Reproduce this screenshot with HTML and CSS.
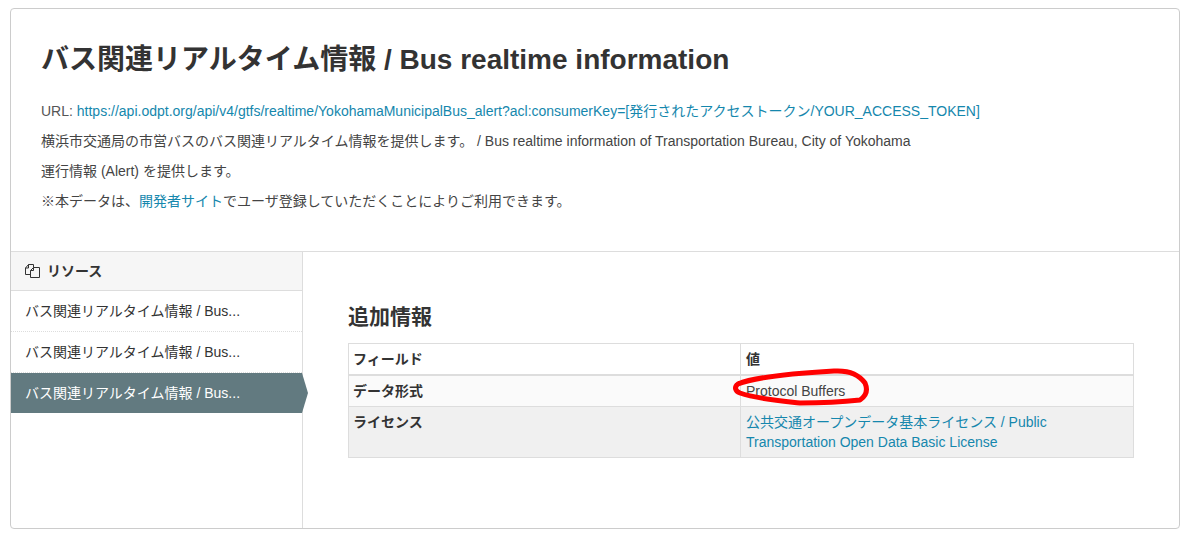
FILE: index.html
```html
<!DOCTYPE html>
<html lang="ja">
  <head>
    <meta charset="utf-8">
    <title>バス関連リアルタイム情報 / Bus realtime information</title>
    <link rel="stylesheet" href="styles.css">
  </head>
  <body>
    <div class="module">
      <section class="head">
        <h1>バス関連リアルタイム情報 / Bus realtime information</h1>
        <p class="url">URL: <a href="#">https://api.odpt.org/api/v4/gtfs/realtime/YokohamaMunicipalBus_alert?acl:consumerKey=[発行されたアクセストークン/YOUR_ACCESS_TOKEN]</a></p>
        <p>横浜市交通局の市営バスのバス関連リアルタイム情報を提供します。 / Bus realtime information of Transportation Bureau, City of Yokohama</p>
        <p>運行情報 (Alert) を提供します。</p>
        <p>※本データは、<a href="#">開発者サイト</a>でユーザ登録していただくことによりご利用できます。</p>
      </section>
      <div class="wrap">
        <aside class="side">
          <h2 class="side-title">
            <svg class="icon" width="15" height="14" viewBox="0 0 15 14" fill="none" stroke="#333" stroke-width="1">
              <path d="M5.5 10.5H0.5V4L3.5 0.5H8.5V3.5"/>
              <path d="M3.5 0.5V4H0.5"/>
              <path d="M5.5 13.5V6.5L8.5 3.5H14.5V13.5Z"/>
              <path d="M8.5 3.5V6.5H5.5"/>
            </svg>
            リソース
          </h2>
          <ul class="res-list">
            <li><a href="#">バス関連リアルタイム情報 / Bus...</a></li>
            <li><a href="#">バス関連リアルタイム情報 / Bus...</a></li>
            <li class="active"><a href="#">バス関連リアルタイム情報 / Bus...</a></li>
          </ul>
        </aside>
        <main class="content">
          <h3>追加情報</h3>
          <table>
            <thead>
              <tr><th>フィールド</th><th>値</th></tr>
            </thead>
            <tbody>
              <tr>
                <th>データ形式</th>
                <td class="circled">Protocol Buffers
                  <svg class="scribble" width="140" height="40" viewBox="0 0 140 40" fill="none" stroke="#f00" stroke-width="5" stroke-linecap="round" stroke-linejoin="round">
                    <path d="M6 16C20 10 50 6 102 3C118 2 128 8 133 15C136 22 134 28 128 32C110 34 85 35 68 35C50 33 25 31 8 25C3 23 2 19 6 16"/>
                  </svg>
                </td>
              </tr>
              <tr>
                <th>ライセンス</th>
                <td><a href="#">公共交通オープンデータ基本ライセンス / Public Transportation Open Data Basic License</a></td>
              </tr>
            </tbody>
          </table>
        </main>
      </div>
    </div>
  </body>
</html>
```

FILE: styles.css
```css
* {
    box-sizing: border-box;
}
body {
    margin: 0;
    padding: 8px 19px 12px 10px;
    background-color: #fff;
    color: #444;
    font-family: "Liberation Sans", "Noto Sans CJK JP", sans-serif;
    font-size: 14px;
    line-height: 20px;
}
a {
    color: #1587ad;
    text-decoration: none;
}
.module {
    height: 521px;
    display: flex;
    flex-direction: column;
    border: 1px solid #ccc;
    border-radius: 4px;
}
.head {
    height: 243px;
    padding: 31px 30px 0;
    border-bottom: 1px solid #ddd;
}
.head h1 {
    margin: 0 0 21px;
    color: #333;
    font-size: 28px;
    line-height: 40px;
}
.head p {
    margin: 0 0 10px;
}
.head p.url {
    color: #555;
}
.wrap {
    flex: 1;
    display: flex;
}
.side {
    width: 292px;
    border-right: 1px solid #ddd;
}
.side-title {
    height: 39px;
    margin: 0;
    padding: 0 14px;
    display: flex;
    align-items: center;
    gap: 7px;
    background-color: #f6f6f6;
    border-bottom: 1px solid #ddd;
    color: #333;
    font-size: 14px;
}
.res-list {
    margin: 0;
    padding: 0;
    list-style: none;
}
.res-list li {
    height: 41px;
    border-bottom: 1px dotted #ddd;
}
.res-list a {
    display: block;
    padding: 10px 14px;
    color: #333;
}
.res-list li.active {
    position: relative;
    height: 40px;
    border-bottom: 0;
    background-color: #627a80;
}
.res-list li.active a {
    color: #fff;
}
.res-list li.active:after {
    position: absolute;
    top: 0;
    left: 100%;
    width: 6px;
    height: 100%;
    content: "";
    background-color: #627a80;
    clip-path: polygon(0 0, 100% 50%, 0 100%);
}
.content {
    flex: 1;
    padding: 50px 45px 0;
}
.content h3 {
    margin: 0 0 11px;
    color: #333;
    font-size: 21px;
    line-height: 30px;
}
table {
    width: 786px;
    table-layout: fixed;
    border-collapse: collapse;
}
th, td {
    padding: 5px;
    border: 1px solid #ddd;
    text-align: left;
    vertical-align: top;
}
th:first-child {
    width: 392px;
    padding-left: 4px;
}
thead th {
    border-bottom-width: 2px;
    color: #333;
}
tbody tr {
    background-color: #fafafa;
}
tbody tr:nth-child(2) {
    background-color: #f0f0f0;
}
tbody th {
    color: #333;
}
.circled {
    position: relative;
}
.scribble {
    position: absolute;
    top: -8px;
    left: -9px;
}
```
